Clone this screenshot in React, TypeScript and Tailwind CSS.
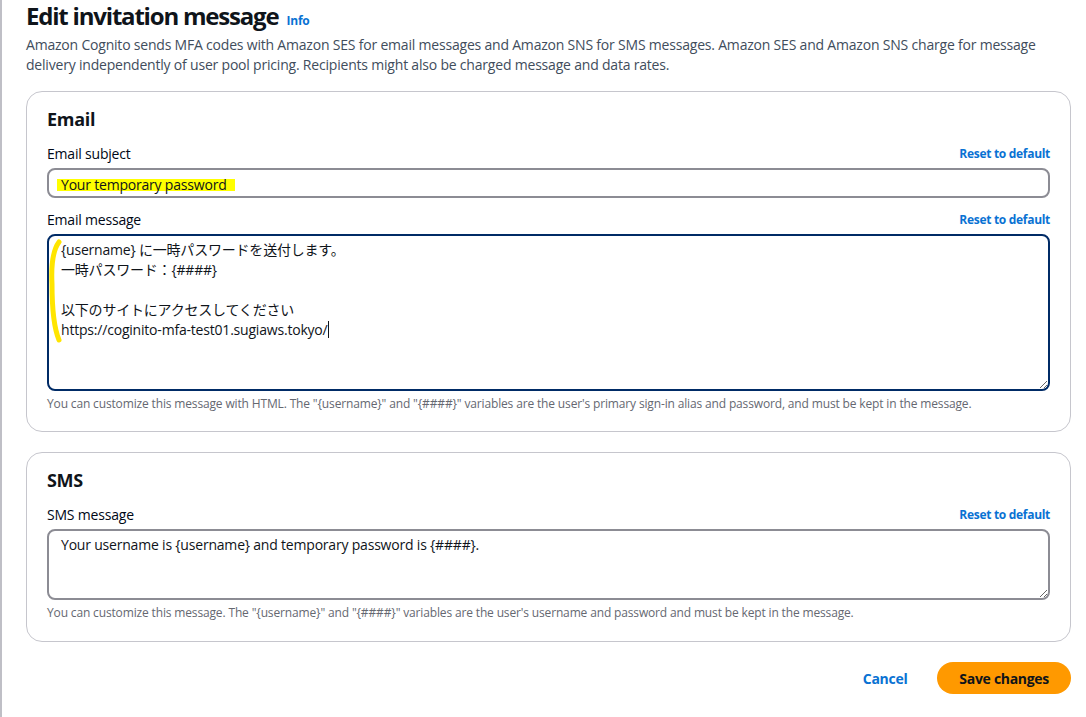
const FONT = "font-['Open_Sans','Noto_Sans_CJK_JP',sans-serif]"

function FieldHeader({ label }: { label: string }) {
  return (
    <div className="flex items-end justify-between mb-1">
      <span className="text-[14px] leading-5 tracking-[-0.2px] text-[#000716]">{label}</span>
      <a className="text-[12px] leading-4 font-bold tracking-[-0.3px] text-[#0972d3] mb-0.5">Reset to default</a>
    </div>
  )
}

function Card({ title, className, children }: { title: string; className: string; children: React.ReactNode }) {
  return (
    <section className={`border border-[#c6c6cd] rounded-2xl px-5 pt-4 ${className}`}>
      <h2 className="text-[18px] leading-[22px] font-bold tracking-[-0.3px] text-[#0f141a] mb-[14px]">{title}</h2>
      {children}
    </section>
  )
}

export default function App() {
  return (
    <div className={`${FONT} min-h-[717px] bg-white border-l-2 border-[#bfbfc6] pl-6 pr-[15px] pt-0.5 text-[#0f141a]`}>
      {/* Header */}
      <div className="flex items-baseline gap-2">
        <h1 className="text-[24px] leading-7 font-bold tracking-[-1.2px]">Edit invitation message</h1>
        <a className="text-[12px] font-bold tracking-[-0.2px] text-[#0972d3]">Info</a>
      </div>
      <p className="text-[14px] leading-5 tracking-[-0.2px] text-[#414d5c] mt-[5px] mb-4">
        Amazon Cognito sends MFA codes with Amazon SES for email messages and Amazon SNS for SMS messages. Amazon SES and Amazon SNS charge for message delivery independently of user pool pricing. Recipients might also be charged message and data rates.
      </p>

      <div className="flex flex-col gap-5">
        <Card title="Email" className="pb-[19px]">
          <FieldHeader label="Email subject" />
          <div className="h-[30px] border-2 border-[#8c8c94] rounded-lg px-3 py-1 text-[14px] leading-5 tracking-[-0.2px] mb-3">
            <span className="inline-block h-3 leading-3 align-[-1px] bg-[#ffff00] -ml-1 pl-1 pr-2">Your temporary password</span>
          </div>

          <FieldHeader label="Email message" />
          <div className="relative h-[157px] border-2 border-[#002b66] rounded-lg px-3 py-1 text-[14px] leading-5 tracking-[-0.2px] resize-y overflow-auto">
            <div>{'{username}'} に一時パスワードを送付します。</div>
            <div>一時パスワード：{'{####}'}</div>
            <div>&nbsp;</div>
            <div>以下のサイトにアクセスしてください</div>
            <div>
              https://coginito-mfa-test01.sugiaws.tokyo/
              <span className="inline-block w-px h-[17px] bg-[#0f141a] align-[-3px]" />
            </div>
            <svg className="absolute left-0 top-0 pointer-events-none" width="30" height="120" viewBox="0 0 30 120">
              <path d="M10 6 C 4 14, 2 28, 3 48 C 3 72, 5 92, 10 104" stroke="#ffe500" strokeWidth="5" fill="none" strokeLinecap="round" />
            </svg>
          </div>
          <p className="text-[12px] leading-4 tracking-[-0.15px] text-[#656871] mt-[5px]">
            You can customize this message with HTML. The "{'{username}'}" and "{'{####}'}" variables are the user's primary sign-in alias and password, and must be kept in the message.
          </p>
        </Card>

        <Card title="SMS" className="pb-[20px]">
          <FieldHeader label="SMS message" />
          <div className="h-[71px] border-2 border-[#8c8c94] rounded-lg px-3 py-1 text-[14px] leading-5 tracking-[-0.2px] resize-y overflow-auto">
            Your username is {'{username}'} and temporary password is {'{####}'}.
          </div>
          <p className="text-[12px] leading-4 tracking-[-0.15px] text-[#656871] mt-[5px]">
            You can customize this message. The "{'{username}'}" and "{'{####}'}" variables are the user's username and password and must be kept in the message.
          </p>
        </Card>
      </div>

      {/* Actions */}
      <div className="flex justify-end items-center gap-[30px] mt-5">
        <button className="text-[14px] font-bold tracking-[-0.3px] text-[#0972d3]">Cancel</button>
        <button className="h-[32px] px-[22px] rounded-full bg-[#ff9900] text-[14px] font-bold tracking-[-0.3px] text-[#0f141a]">Save changes</button>
      </div>
    </div>
  )
}
